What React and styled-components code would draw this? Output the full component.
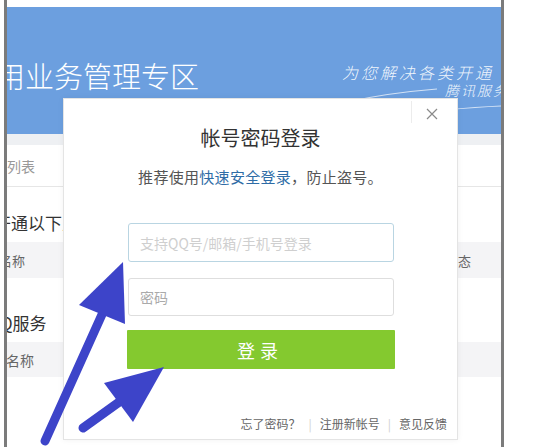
import React from "react";
import styled, { createGlobalStyle } from "styled-components";

const GlobalStyle = createGlobalStyle`
  html, body {
    margin: 0;
    padding: 0;
    background: #ffffff;
  }
  body {
    font-family: "Noto Sans CJK SC", "Noto Sans", sans-serif;
    color: #333;
  }
  * {
    box-sizing: border-box;
  }
`;

// whole picture
const Screen = styled.div`
  position: relative;
  width: 546px;
  height: 447px;
  overflow: hidden;
  background: #fff;
  padding-left: 4px;
`;

// the page behind the dialog, with its grey window edges
const Frame = styled.div`
  width: 500px;
  height: 447px;
  border-left: 3px solid #7b7b7b;
  border-right: 3px solid #7b7b7b;
  padding-top: 7px;
  overflow: hidden;
  display: flex;
  flex-direction: column;
`;

const Banner = styled.div`
  position: relative;
  height: 127px;
  flex-shrink: 0;
  background: #6c9fdf;
  display: flex;
  align-items: flex-start;
  justify-content: space-between;
  overflow: hidden;
`;

const BannerTitle = styled.h1`
  margin: 52px 0 0 -11px;
  font-size: 29px;
  line-height: 32px;
  font-weight: 300;
  color: #fff;
  white-space: nowrap;
`;

const Slogan = styled.div`
  flex-shrink: 0;
  width: 170px;
  margin: 56px -11px 0 0;
  color: rgba(255, 255, 255, 0.92);
  font-style: italic;
  font-weight: 300;
  white-space: nowrap;
`;

const SloganLine = styled.div`
  font-size: ${(p) => p.size}px;
  line-height: ${(p) => p.lh}px;
  letter-spacing: ${(p) => p.spacing}px;
  padding-left: ${(p) => p.indent}px;
`;

const Swoosh = styled.svg`
  position: absolute;
  left: 0;
  top: 0;
  pointer-events: none;
`;

const Strip = styled.div`
  height: 11px;
  flex-shrink: 0;
  background: #eef0f3;
`;

const ListHead = styled.div`
  height: 42px;
  flex-shrink: 0;
  display: flex;
  align-items: center;
  border-bottom: 1px solid #e6e6e6;
  font-size: 14px;
  color: #999;
`;

const Section = styled.div`
  height: ${(p) => p.h}px;
  flex-shrink: 0;
  display: flex;
  align-items: flex-end;
  padding-bottom: ${(p) => p.pb}px;
`;

const SectionTitle = styled.div`
  margin-left: ${(p) => p.offset}px;
  font-size: 17px;
  line-height: 20px;
  color: #333;
  white-space: nowrap;
`;

const HeadRow = styled.div`
  height: ${(p) => p.h}px;
  flex-shrink: 0;
  display: flex;
  align-items: center;
  justify-content: space-between;
  background: #f4f4f6;
  font-size: 13px;
  color: #666;
  padding-right: 30px;
`;

const Cell = styled.span`
  margin-left: ${(p) => p.offset || 0}px;
  font-size: ${(p) => p.size || 13}px;
  white-space: nowrap;
`;

// login dialog over the page
const Dialog = styled.div`
  position: absolute;
  left: 63px;
  top: 98px;
  width: 395px;
  height: 342px;
  background: #fff;
  border: 1px solid #e4e4e4;
  box-shadow: 0 0 6px rgba(0, 0, 0, 0.06);
  display: flex;
  flex-direction: column;
  align-items: center;
  padding-top: 27px;
  padding-bottom: 7px;
`;

const CloseButton = styled.button`
  position: absolute;
  top: 9px;
  right: 19px;
  width: 12px;
  height: 12px;
  padding: 0;
  border: 0;
  background: none;
  cursor: pointer;
  display: flex;
`;

const Divider = styled.div`
  position: absolute;
  left: 347px;
  top: 2px;
  width: 1px;
  height: 22px;
  background: #ececec;
`;

const Title = styled.h2`
  margin: 0;
  font-size: 20px;
  line-height: 24px;
  font-weight: 400;
  color: #333;
`;

const Hint = styled.p`
  margin: 17px 0 0;
  font-size: 15px;
  line-height: 20px;
  letter-spacing: 0.3px;
  color: #555;
  a {
    color: #2e6ca6;
    text-decoration: none;
  }
`;

const Field = styled.input`
  width: 266px;
  height: ${(p) => p.h}px;
  margin-top: ${(p) => p.mt}px;
  margin-left: 1px;
  padding: 0 11px;
  border: 1px solid ${(p) => (p.active ? "#b9d5e2" : "#dedede")};
  border-radius: 3px;
  font-family: inherit;
  font-size: 14px;
  color: #333;
  outline: none;
  &::placeholder {
    color: ${(p) => (p.active ? "#cfcfcf" : "#aaa")};
  }
`;

const LoginButton = styled.button`
  width: 268px;
  height: 39px;
  margin-top: 14px;
  border: 0;
  border-radius: 1px;
  background: #84c92f;
  color: #fff;
  font-family: inherit;
  font-size: 18px;
  letter-spacing: 5px;
  padding-left: 5px;
  cursor: pointer;
`;

const Footer = styled.div`
  margin-top: auto;
  align-self: flex-end;
  margin-right: 10px;
  display: flex;
  align-items: center;
  font-size: 12px;
  line-height: 16px;
  color: #666;
`;

const FooterLink = styled.a`
  color: #666;
  text-decoration: none;
`;

const Sep = styled.span`
  margin: 0 8px;
  color: #d0d0d0;
`;

const Arrows = styled.svg`
  position: absolute;
  left: 0;
  top: 0;
  pointer-events: none;
`;

export default function App() {
  const blue = "#3d44c9";
  return (
    <>
      <GlobalStyle />
      <Screen>
        <Frame>
          <Banner>
            <BannerTitle>用业务管理专区</BannerTitle>
            <Slogan>
              <SloganLine size={16} lh={19} spacing={3} indent={0}>
                为您解决各类开通
              </SloganLine>
              <SloganLine size={14} lh={17} spacing={2} indent={103}>
                腾讯服务
              </SloganLine>
            </Slogan>
            <Swoosh width="494" height="127" viewBox="0 0 494 127">
              <path
                d="M340 95 Q 380 86 430 82"
                fill="none"
                stroke="rgba(255,255,255,0.7)"
                strokeWidth="1.2"
              />
              <path
                d="M438 103 Q 470 100 494 99"
                fill="none"
                stroke="rgba(255,255,255,0.7)"
                strokeWidth="1.2"
              />
            </Swoosh>
          </Banner>
          <Strip />
          <ListHead>列表</ListHead>
          <Section h={55} pb={9}>
            <SectionTitle offset={-13}>开通以下业务</SectionTitle>
          </Section>
          <HeadRow h={36}>
            <Cell offset={-8}>名称</Cell>
            <Cell>状态</Cell>
          </HeadRow>
          <Section h={64} pb={9}>
            <SectionTitle offset={-7}>Q服务</SectionTitle>
          </Section>
          <HeadRow h={35}>
            <Cell offset={-1} size={14}>
              名称
            </Cell>
          </HeadRow>
        </Frame>

        <Dialog>
          <Divider />
          <CloseButton aria-label="关闭">
            <svg width="12" height="12" viewBox="0 0 12 12">
              <path
                d="M1 1 L11 11 M11 1 L1 11"
                stroke="#8a8a8a"
                strokeWidth="1.2"
                fill="none"
              />
            </svg>
          </CloseButton>
          <Title>帐号密码登录</Title>
          <Hint>
            推荐使用<a href="#">快速安全登录</a>，防止盗号。
          </Hint>
          <Field active h={39} mt={36} placeholder="支持QQ号/邮箱/手机号登录" />
          <Field h={38} mt={16} type="password" placeholder="密码" />
          <LoginButton>登录</LoginButton>
          <Footer>
            <FooterLink href="#">忘了密码？</FooterLink>
            <Sep>|</Sep>
            <FooterLink href="#">注册新帐号</FooterLink>
            <Sep>|</Sep>
            <FooterLink href="#">意见反馈</FooterLink>
          </Footer>
        </Dialog>

        <Arrows width="546" height="447" viewBox="0 0 546 447">
          <line
            x1="45"
            y1="441"
            x2="104"
            y2="310"
            stroke={blue}
            strokeWidth="9"
            strokeLinecap="round"
          />
          <polygon points="123,262 79,305 125,324" fill={blue} />
          <line
            x1="83"
            y1="428"
            x2="122"
            y2="400"
            stroke={blue}
            strokeWidth="9"
            strokeLinecap="round"
          />
          <polygon points="164,367 104,383 133,422" fill={blue} />
        </Arrows>
      </Screen>
    </>
  );
}
